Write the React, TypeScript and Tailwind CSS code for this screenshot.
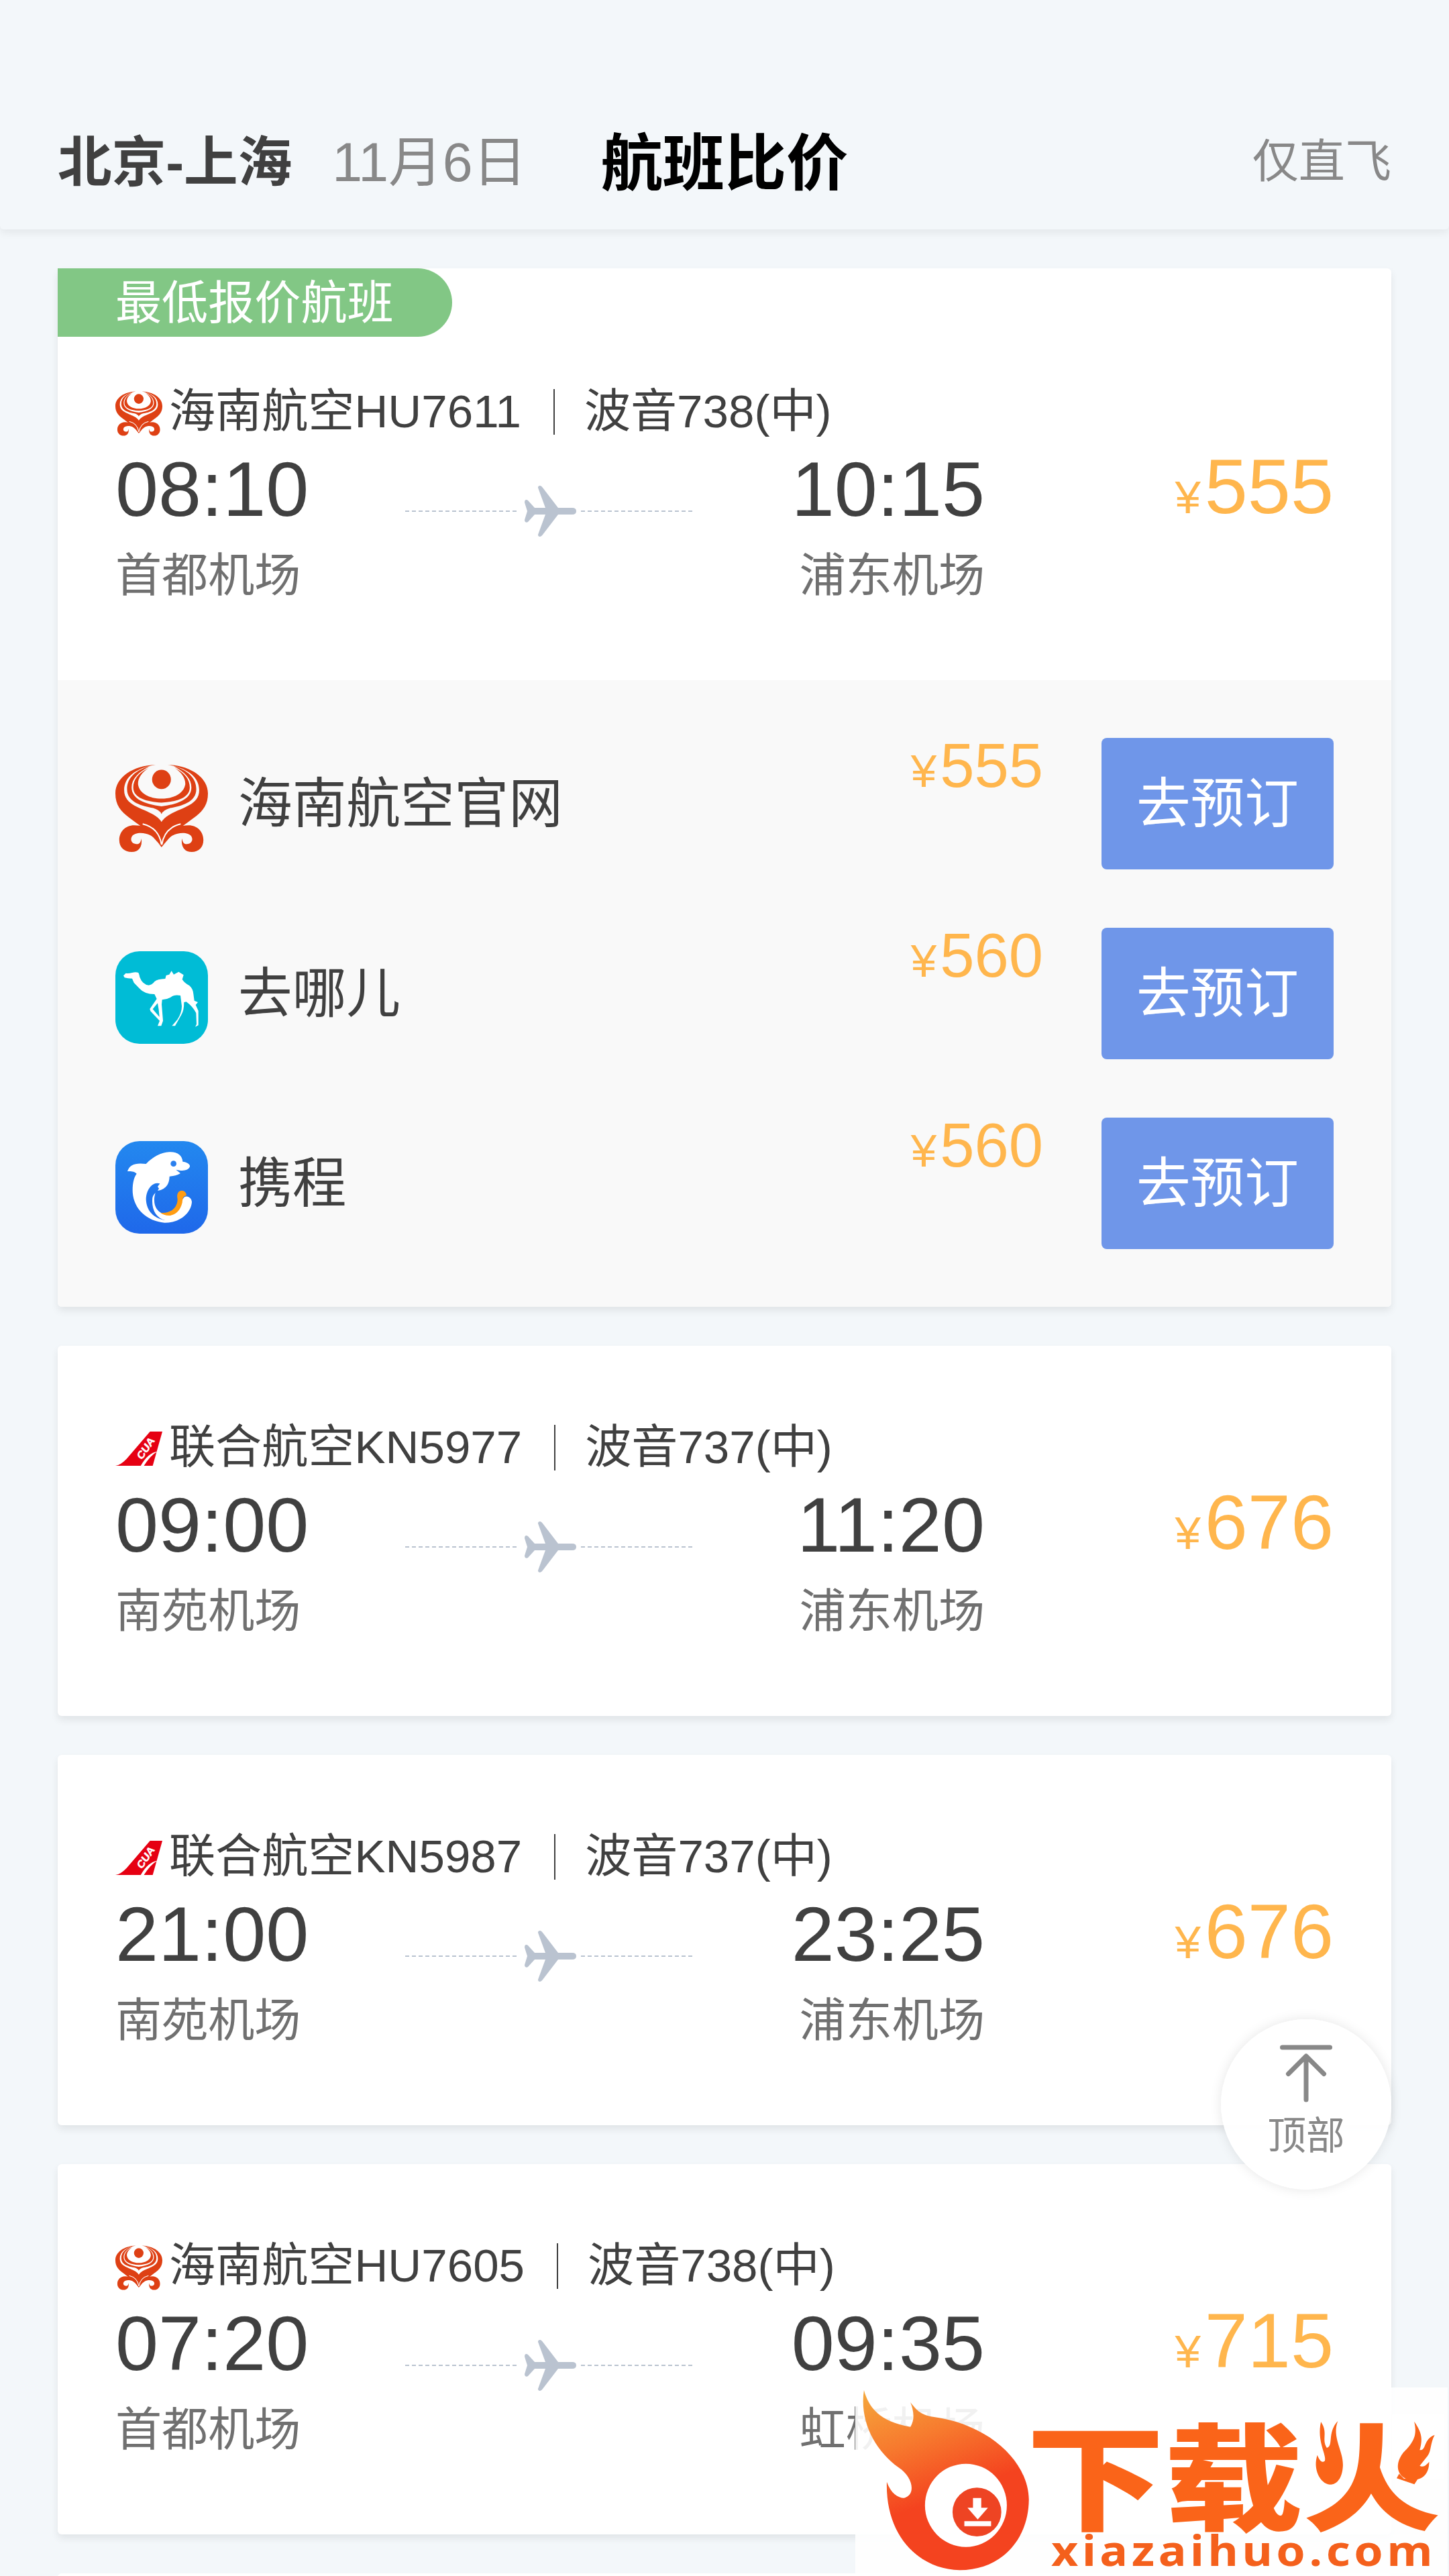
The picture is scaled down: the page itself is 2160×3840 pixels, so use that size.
import React from 'react';

type LogoProps = { className?: string };

function HainanLogo({ className }: LogoProps) {
  return (
    <svg viewBox="66 72 285 278" preserveAspectRatio="none" className={className}>
      <g fill="#de4014">
        <circle cx="208" cy="126" r="29" />
        <path d="M190 82C120 84 66 120 66 168C66 240 135 240 198 317L208 330L219 317C282 240 351 240 351 168C351 120 297 84 227 82C290 92 324 120 324 158C324 205 268 210 229 234Q213 244 208 254Q203 244 187 234C148 210 93 205 93 158C93 120 127 92 190 82Z" />
        <path d="M172 86C128 98 102 122 102 155C102 196 150 206 182 212Q203 218 208 230Q213 218 235 212C267 206 315 196 315 155C315 122 289 98 245 86C280 104 300 124 300 150C300 184 262 200 208 207C154 200 116 184 116 150C116 124 137 104 172 86Z" />
        <path d="M168 92C138 106 121 126 121 150C121 182 162 193 208 196C254 193 295 182 295 150C295 126 279 106 249 92C272 106 283 126 281 142C276 168 246 184 208 184C171 184 140 168 136 142C134 126 145 106 168 92Z" />
        <path d="M206 322C192 286 170 264 124 264C96 264 78 284 78 308C78 330 94 344 116 344C138 344 150 328 146 303C144 318 137 322 128 320C116 318 111 307 117 297C126 284 155 284 174 294Q192 303 206 322Z" />
        <path d="M211 322C225 286 247 264 291 264C319 264 337 284 337 308C337 330 322 344 301 344C279 344 267 328 271 303C273 318 280 322 289 320C301 318 306 307 300 297C291 284 262 284 243 294Q225 303 211 322Z" />
      </g>
      <path d="M208 322C203 290 184 268 150 260M209 322C214 290 233 268 267 260" fill="none" stroke="#fff" strokeWidth="4" />
    </svg>
  );
}

function UnitedLogo({ className }: LogoProps) {
  return (
    <svg viewBox="66 75 210 210" className={className}>
      <path d="M66 255Q88 253 116 224L221 102H276L233 255Z" fill="#e60012" />
      <path d="M178 257Q212 196 254 191Q224 206 192 257Z" fill="#fff" />
      <text
        transform="translate(184 231) rotate(-56) skewX(-8)"
        fontFamily="Liberation Sans, sans-serif"
        fontWeight="700"
        fontSize="46"
        textLength="106"
        lengthAdjust="spacingAndGlyphs"
        fill="#fff"
        stroke="#fff"
        strokeWidth="1.500"
      >
        CUA
      </text>
    </svg>
  );
}

function QunarLogo({ className }: LogoProps) {
  return (
    <svg viewBox="21 24 414 414" className={className}>
      <rect x="21" y="24" width="414" height="414" rx="108" fill="#00bcd6" />
      <path
        d="M57 133L68 122Q80 124 96 120Q112 116 124 120Q128 128 130 140Q142 172 170 176Q186 174 196 160Q208 148 244 147L248 132L262 128L272 112L282 128L304 116L326 130L320 150Q330 166 352 178Q368 192 370 215L374 245L390 252L380 264L392 290V355L378 362L384 350L382 300Q366 270 338 250L328 252Q328 290 316 308L288 358H274L298 330Q318 300 318 270L312 222Q285 216 268 230Q250 240 230 241L228 262L234 335L226 358H210L219 335L178 292L175 282L206 237L196 216Q150 216 128 190L104 165L96 146Q75 146 62 142ZM210 256L188 283L218 318Q216 285 210 256Z"
        fill="#fff"
        fillRule="evenodd"
      />
    </svg>
  );
}

function CtripLogo({ className }: LogoProps) {
  return (
    <svg viewBox="21 870 414 414" className={className}>
      <defs>
        <linearGradient id="ctrip" x1="0" y1="0" x2="0" y2="1">
          <stop offset="0" stopColor="#2388ef" />
          <stop offset="1" stopColor="#1f68ea" />
        </linearGradient>
      </defs>
      <rect x="21" y="870" width="414" height="414" rx="108" fill="url(#ctrip)" />
      <path
        d="M75 1005C85 975 110 966 158 972C190 940 225 920 262 919C300 918 320 935 322 962C340 964 356 972 354 984C350 998 330 1004 308 1001L292 998L312 1014C295 1024 280 1026 263 1028C262 1060 250 1085 210 1092L216 1082L210 1074L220 1060C185 1050 158 1090 158 1130C160 1180 190 1215 245 1224C205 1215 185 1180 186 1135C186 1120 190 1110 200 1102C185 1150 205 1185 232 1193C265 1203 300 1185 305 1150L330 1120C345 1112 362 1125 363 1142C360 1190 310 1237 240 1235C160 1228 98 1170 98 1090C98 1055 105 1030 116 1016C108 1005 90 1004 75 1005Z"
        fill="#fff"
      />
      <path d="M222 1190C260 1195 298 1175 299 1130C294 1110 300 1092 318 1091C332 1092 340 1104 338 1114C322 1116 322 1130 320 1145C312 1180 290 1202 260 1203C245 1202 232 1198 222 1190Z" fill="#ff9c12" />
      <circle cx="281" cy="971" r="13" fill="#2a7fee" />
    </svg>
  );
}

function Plane() {
  return (
    <svg viewBox="0 0 77 76" className="h-[76px] w-[77px] shrink-0">
      <path
        d="M20 3Q20 0 23 0Q25 0 27 3L50 33H71Q77 33 77 38Q77 43 71 43H50L27 73Q25 76 23 76Q20 76 20 73L31 43H15L5 54Q3 55.500 1 54Q0 53 0 51L4 38L0 25Q0 22 1 21.500Q3 20.500 5 22L15 33H31Z"
        fill="#bac3d0"
      />
    </svg>
  );
}

function Dashes() {
  return <span className="h-[2px] w-[170px] bg-[repeating-linear-gradient(90deg,#bac3d0_0px,#bac3d0_6px,transparent_6px,transparent_10px)]" />;
}

const airlines = {
  HU: { name: '海南航空', Logo: HainanLogo },
  KN: { name: '联合航空', Logo: UnitedLogo },
};

interface Flight {
  carrier: keyof typeof airlines;
  no: string;
  plane: string;
  depart: string;
  from: string;
  arrive: string;
  to: string;
  price: number;
}

const flights: Flight[] = [
  { carrier: 'HU', no: 'HU7611', plane: '波音738(中)', depart: '08:10', from: '首都机场', arrive: '10:15', to: '浦东机场', price: 555 },
  { carrier: 'KN', no: 'KN5977', plane: '波音737(中)', depart: '09:00', from: '南苑机场', arrive: '11:20', to: '浦东机场', price: 676 },
  { carrier: 'KN', no: 'KN5987', plane: '波音737(中)', depart: '21:00', from: '南苑机场', arrive: '23:25', to: '浦东机场', price: 676 },
  { carrier: 'HU', no: 'HU7605', plane: '波音738(中)', depart: '07:20', from: '首都机场', arrive: '09:35', to: '虹桥机场', price: 715 },
];

const offers = [
  { name: '海南航空官网', price: 555, Logo: HainanLogo },
  { name: '去哪儿', price: 560, Logo: QunarLogo },
  { name: '携程', price: 560, Logo: CtripLogo },
];

function FlightInfo({ flight }: { flight: Flight }) {
  const { name, Logo } = airlines[flight.carrier];

  return (
    <div className="px-[86px]">
      <div className="flex h-[80px] items-center text-[69.12px] text-[#404040]">
        <Logo className="mt-1 mr-[10px] h-[70px] w-[70px]" />
        <span>{name}{flight.no}</span>
        <span className="mr-[44px] ml-[48px] h-[68px] w-[2px] bg-[#404040]" />
        <span>{flight.plane}</span>
      </div>
      <div className="mt-[9px] flex items-start">
        <div className="w-[432px]">
          <div className="text-[115.2px] leading-[132px] text-[#404040]">{flight.depart}</div>
          <div className="mt-[23px] text-[69.12px] leading-[80px] text-[#707070]">{flight.from}</div>
        </div>
        <div className="flex h-[197px] w-[432px] items-center justify-between">
          <Dashes />
          <Plane />
          <Dashes />
        </div>
        <div className="w-[432px] text-right">
          <div className="text-[115.2px] leading-[132px] text-[#404040]">{flight.arrive}</div>
          <div className="mt-[23px] text-[69.12px] leading-[80px] text-[#707070]">{flight.to}</div>
        </div>
        <div className="flex-1 text-right text-[115.2px] leading-[124px] text-[#ffb64d]">
          <span className="mr-[6px] text-[69.12px]">¥</span>{flight.price}
        </div>
      </div>
    </div>
  );
}

function OfferList() {
  return (
    <div className="flex flex-col gap-[87px] rounded-b-md bg-[#f9f9f9] p-[86px]">
      {offers.map(({ name, price, Logo }) => (
        <div key={name} className="flex h-[196px] items-center">
          <Logo className="mt-[12px] h-[138px] w-[138px]" />
          <span className="ml-[45px] flex-1 text-[80.64px] text-[#404040]">{name}</span>
          <span className="mr-[87px] self-start text-[92.16px] leading-[84px] text-[#ffb64d]">
            <span className="mr-[5px] text-[69.12px]">¥</span>{price}
          </span>
          <button className="flex h-[196px] w-[346px] items-center justify-center rounded-lg bg-[#6f96e9] text-[80.64px] text-white">
            去预订
          </button>
        </div>
      ))}
    </div>
  );
}

function BackToTop() {
  return (
    <button className="absolute top-[3010px] left-[1820px] flex h-[254px] w-[254px] flex-col items-center rounded-full bg-white/95 pt-[37px] text-[#888] shadow-[0_0_18px_rgba(0,0,0,0.1)]">
      <svg viewBox="0 0 80 88" className="h-[88px] w-[80px]" fill="none" stroke="currentColor" strokeWidth="7" strokeLinecap="round" strokeLinejoin="round">
        <path d="M4.500 5H75.500M40 19V83M13.500 44.500L40 18L66.500 44.500" />
      </svg>
      <span className="mt-[11px] text-[57.6px] leading-[76px]">顶部</span>
    </button>
  );
}

function SiteStamp() {
  return (
    <div className="absolute top-[3559px] left-[1275px] h-[281px] w-[883px] bg-white/90">
      <svg viewBox="0 0 883 281" className="h-[281px] w-[883px]">
        <defs>
          <linearGradient id="fire" gradientUnits="userSpaceOnUse" x1="80" y1="130" x2="360" y2="560">
            <stop offset="0" stopColor="#f5a83c" />
            <stop offset="0.5" stopColor="#f77a2e" />
            <stop offset="1" stopColor="#f4431f" />
          </linearGradient>
        </defs>
        <text
          x="255"
          y="199"
          fontFamily="'Noto Sans CJK SC', sans-serif"
          fontWeight="900"
          fontSize="172"
          textLength="618"
          lengthAdjust="spacingAndGlyphs"
          fill="#fa6419"
        >
          下载火
        </text>
        {/* the side strokes of the last character are small flames */}
        <path d="M674 40H744V100L726 142L674 148ZM800 40H878V136H818L800 118Z" fill="#fff" />
        <g transform="scale(0.5867 0.3333) translate(-60 -118)">
          <path
            d="M82 130C94 205 120 270 200 294C212 260 208 220 200 184C216 220 224 236 252 248C400 280 500 450 501 620C500 800 430 935 325 935C220 930 136 780 140 540C150 590 168 612 184 612C214 600 208 520 170 476C110 400 70 270 82 130Z"
            fill="url(#fire)"
          />
          <ellipse cx="341" cy="645" rx="104" ry="186" fill="#fff" />
          <ellipse cx="369" cy="675" rx="62" ry="109" fill="#ee4423" />
          <path d="M359 612H380V656H397L371 708L345 656H359ZM337 716H405V738H337Z" fill="#fff" />
          <g fill="#fa6419">
            <path d="M1243 272C1262 320 1244 350 1258 388C1276 380 1258 320 1286 268C1270 340 1300 400 1299 465C1298 520 1285 552 1266 552C1240 548 1222 480 1234 420C1240 450 1248 456 1253 446C1258 420 1232 360 1243 272Z" />
            <path d="M1480 270C1500 320 1502 350 1494 398C1512 400 1502 350 1532 330C1520 370 1524 400 1514 424L1494 468C1504 478 1512 462 1518 450C1518 510 1498 532 1474 532C1440 528 1426 470 1452 410C1480 360 1488 330 1480 270Z" />
          </g>
        </g>
        <text
          x="292"
          y="266"
          fontFamily="'Noto Sans', sans-serif"
          fontWeight="700"
          fontSize="62"
          letterSpacing="5"
          textLength="574"
          lengthAdjust="spacingAndGlyphs"
          fill="#f4601c"
        >
          xiazaihuo.com
        </text>
      </svg>
    </div>
  );
}

export default function App() {
  return (
    <div className="relative h-[3840px] w-[2160px] overflow-hidden bg-[#f3f7fa] font-['Liberation_Sans','Noto_Sans_CJK_SC',sans-serif] leading-none">
      <header className="grid h-[342px] grid-cols-[1fr_auto_1fr] items-center rounded-b-md px-[86px] pt-[142px] shadow-[0_6px_12px_rgba(0,0,0,0.06)]">
        <div className="flex items-center text-[80.64px]">
          <span className="font-bold text-[#404040]">北京-上海</span>
          <span className="ml-[60px] text-[#888]">11月6日</span>
        </div>
        <h1 className="pt-[6px] text-[92.16px] font-bold text-black">航班比价</h1>
        <span className="text-right text-[69.12px] text-[#888]">仅直飞</span>
      </header>

      <main className="flex flex-col gap-[58px] px-[86px] pt-[58px]">
        {flights.map((flight, i) =>
          i === 0 ? (
            <section key={flight.no} className="h-[1548px] shrink-0 rounded-md bg-white shadow-[0_6px_12px_rgba(0,0,0,0.08)]">
              <div className="flex h-[102px] w-[588px] items-center rounded-r-full bg-[#82c785] pt-[4px] pl-[86px] text-[69.12px] text-white">
                最低报价航班
              </div>
              <div className="h-[512px] pt-[72px]">
                <FlightInfo flight={flight} />
              </div>
              <OfferList />
            </section>
          ) : (
            <section key={flight.no} className="h-[552px] shrink-0 rounded-md bg-white pt-[112px] shadow-[0_6px_12px_rgba(0,0,0,0.08)]">
              <FlightInfo flight={flight} />
            </section>
          )
        )}
        <section className="h-[552px] shrink-0 rounded-md bg-white" />
      </main>

      <BackToTop />
      <SiteStamp />
    </div>
  );
}
